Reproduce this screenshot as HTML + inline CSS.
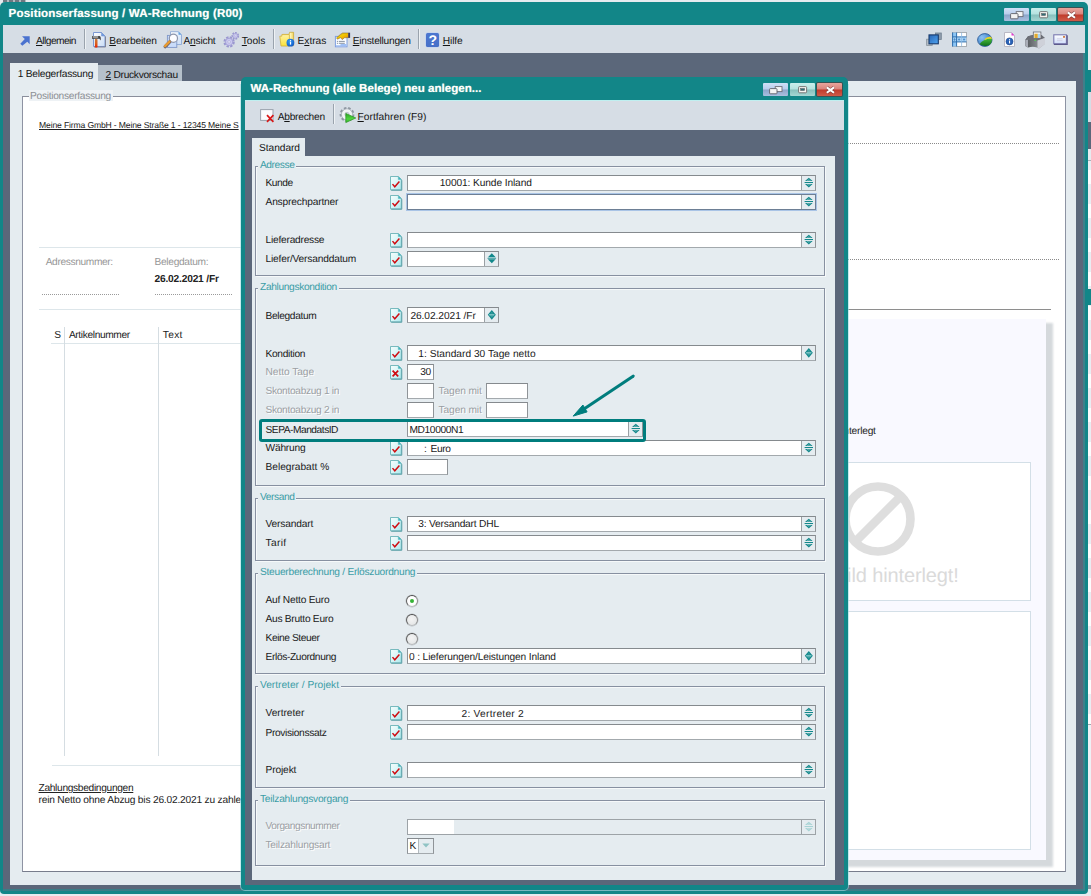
<!DOCTYPE html>
<html lang="de"><head><meta charset="utf-8"><title>Positionserfassung / WA-Rechnung (R00)</title>
<style>
html,body{margin:0;padding:0;}
body{width:1091px;height:896px;position:relative;overflow:hidden;background:#e6ebef;font-family:"Liberation Sans", sans-serif;font-size:10.2px;}
div,span,svg{position:absolute;box-sizing:content-box;}
.win{left:0;top:0;width:1091px;height:896px;}
.t{white-space:pre;line-height:14px;color:#141414;text-rendering:geometricPrecision;}
.b{font-weight:bold;-webkit-text-stroke:0;}
u{text-decoration:underline;}
.i{overflow:visible;}
.f{border:1px solid #8f9498;border-top-color:#858a8e;border-bottom-color:#a3a9ad;}
.ff{box-shadow:0 0 0 1px #a9c4e6;border-color:#6d7f95;}
.fd{border-color:#9da3a7;}
</style></head>
<body>
<svg width="0" height="0" style="left:0;top:0"><defs>
<linearGradient id="gdoc" x1="0" y1="0" x2="1" y2="1"><stop offset="0" stop-color="#f4fdfd"/><stop offset=".45" stop-color="#dcf7f8"/><stop offset="1" stop-color="#a9e8ec"/></linearGradient>
<linearGradient id="gpage" x1="0" y1="0" x2="1" y2="1"><stop offset="0" stop-color="#fff"/><stop offset="1" stop-color="#c9dcf5"/></linearGradient>
<linearGradient id="gblue" x1="0" y1="0" x2="1" y2="1"><stop offset="0" stop-color="#2a66b4"/><stop offset="1" stop-color="#4ea4f2"/></linearGradient>
<radialGradient id="gglobe" cx=".3" cy=".3" r=".8"><stop offset="0" stop-color="#8cc3f2"/><stop offset="1" stop-color="#2a6cbc"/></radialGradient>
<linearGradient id="gprn" x1="0" y1="0" x2="1" y2="0"><stop offset="0" stop-color="#4f5357"/><stop offset=".6" stop-color="#85898e"/><stop offset="1" stop-color="#c3c6ca"/></linearGradient>
<linearGradient id="gmail" x1="0" y1="0" x2="0" y2="1"><stop offset="0" stop-color="#fff"/><stop offset="1" stop-color="#cfdcfa"/></linearGradient>
<linearGradient id="ghandle" x1="0" y1="0" x2="0" y2="1"><stop offset="0" stop-color="#c8793a"/><stop offset=".6" stop-color="#dc5a18"/><stop offset="1" stop-color="#f01c00"/></linearGradient>
<linearGradient id="gfold" x1="0" y1="0" x2="1" y2="0"><stop offset="0" stop-color="#f7df63"/><stop offset=".7" stop-color="#fff6b8"/><stop offset="1" stop-color="#f0d25a"/></linearGradient>
<linearGradient id="gfold2" x1="0" y1="0" x2="0" y2="1"><stop offset="0" stop-color="#fff3a4"/><stop offset="1" stop-color="#fbe23a"/></linearGradient>
<radialGradient id="gball" cx=".4" cy=".35" r=".75"><stop offset="0" stop-color="#2f9cf6"/><stop offset="1" stop-color="#0f52c0"/></radialGradient>
<linearGradient id="ghand" x1="0" y1="0" x2="1" y2="1"><stop offset="0" stop-color="#c9b040"/><stop offset=".45" stop-color="#f2c800"/><stop offset="1" stop-color="#e27a10"/></linearGradient>
<linearGradient id="gplay" x1="0" y1="0" x2="0" y2="1"><stop offset="0" stop-color="#2ea526"/><stop offset=".6" stop-color="#4fd43f"/><stop offset="1" stop-color="#37b52c"/></linearGradient>
<linearGradient id="ggreen" x1="0" y1="0" x2="0" y2="1"><stop offset="0" stop-color="#4cc03a"/><stop offset="1" stop-color="#0f6f1e"/></linearGradient>
</defs></svg>
<div style="left:0px;top:0px;width:1091px;height:896px;background:#e6ebef;"></div>
<div style="left:1088px;top:70px;width:3px;height:21.5px;background:#128688;"></div>
<div style="left:1088px;top:91.5px;width:3px;height:30.5px;background:#d6dde5;"></div>
<div style="left:1088px;top:122px;width:3px;height:27px;background:#5b677a;"></div>
<div style="left:1088px;top:160px;width:3px;height:564px;background:repeating-linear-gradient(180deg,#e9edf2 0 10px,#fdfdfe 10px 24px,#e9edf2 24px 34px);"></div>
<div style="left:1088px;top:160px;width:3px;height:1px;background:#a9b0b8;"></div>
<div style="left:1088px;top:289.4px;width:3px;height:16px;background:#128688;"></div>
<div style="left:1088px;top:724px;width:3px;height:1px;background:#a0a6ae;"></div>
<div style="left:1088px;top:725px;width:3px;height:160px;background:#eef1f5;"></div>
<div style="left:1088px;top:885px;width:3px;height:4px;background:#8a93a0;"></div>
<div style="left:3px;top:0px;width:23px;height:2px;background:repeating-linear-gradient(90deg,#59646e 0 4px,#aab2b8 4px 6px);opacity:.85;"></div>
<div class="win" id="main">
<div style="left:0px;top:2px;width:1088px;height:892px;background:#128688;border-radius:5px 5px 4px 4px;"></div>
<span class="t b" style="top:7px;left:8.6px;font-size:11.6px;color:#fff;text-shadow:0 0 1px rgba(255,255,220,.6);letter-spacing:0.140px;">Positionserfassung / WA-Rechnung (R00)</span>
<div style="left:1004px;top:8px;width:25px;height:13px;background:linear-gradient(#cfe0f6 0,#b9cdec 48%,#8ca5cb 52%,#a9bfdf 100%);border-radius:1px;"></div>
<div style="left:1031px;top:8px;width:25px;height:13px;background:linear-gradient(#c9eeec 0,#b4e2df 48%,#86bfbc 52%,#a5d6d3 100%);border-radius:1px;"></div>
<div style="left:1058px;top:8px;width:25px;height:13px;background:linear-gradient(#e8a49c 0,#d9837a 48%,#bf3a2b 52%,#cf5a48 100%);border-radius:1px;box-shadow:0 0 0 1px rgba(90,40,40,.55);"></div>
<svg class="i" style="left:1010px;top:11px" width="14" height="9" viewBox="0 0 14 9"><rect x="6.2" y=".6" width="6.8" height="5" fill="#f6f6f6" stroke="#6d6f78" stroke-width=".9"/><rect x=".6" y="2.6" width="7.4" height="5.2" rx=".7" fill="#f3f3f3" stroke="#5d5f68" stroke-width=".9"/></svg>
<svg class="i" style="left:1039px;top:11px" width="10" height="8" viewBox="0 0 10 8"><rect x=".6" y=".6" width="8" height="6.2" rx=".9" fill="#f4f4f0" stroke="#6b6b6b" stroke-width=".9"/><rect x="2.6" y="2.5" width="4" height="2" fill="#2f6e75" stroke="#59595f" stroke-width=".5"/></svg>
<svg class="i" style="left:1065.5px;top:10.5px" width="11" height="8" viewBox="0 0 11 8"><path d="M1.8 1.4L9 6.8M9 1.4L1.8 6.8" stroke="#6a3a3a" stroke-width="3.3" opacity=".75"/><path d="M1.8 1.4L9 6.8M9 1.4L1.8 6.8" stroke="#fff" stroke-width="2"/></svg>
<div style="left:3px;top:25px;width:1081.5px;height:28px;background:#d6dde5;"></div>
<div style="left:3px;top:53px;width:1081.5px;height:836px;background:#5b677a;"></div>
<div style="left:3px;top:889px;width:1082px;height:2px;background:#3a7d87;"></div>
<div style="left:1083px;top:53px;width:1.5px;height:837px;background:#3f7f8a;"></div>
<svg class="i" style="left:19.5px;top:35.8px" width="10" height="10" viewBox="0 0 10 10"><path d="M2 .3H9.7V8.3L7.3 5.8L2.3 9.7L.3 7.7L4.8 3Z" fill="#4a72cf"/></svg>
<span class="t" style="top:35px;left:36px;letter-spacing:-0.528px;"><u>A</u>llgemein</span>
<div style="left:84px;top:29px;width:1px;height:20px;background:#9aa3ad;"></div>
<div style="left:85px;top:29px;width:1px;height:20px;background:#eef2f5;"></div>
<svg class="i" style="left:91px;top:31px" width="15" height="17" viewBox="0 0 15 17"><path d="M2.5 1.5H10.5L14 5V15.5H2.5Z" fill="url(#gpage)" stroke="#7b98d2"/><path d="M3 16H14.5V5.5" fill="none" stroke="#7d7f90" stroke-width=".9"/><path d="M10.5 1.5V5H14Z" fill="#6f9be0" stroke="#7b98d2" stroke-width=".6"/><path d="M1 5H8.2C9.6 5 10 6.4 9.7 9.4L8.4 7.7H1Z" fill="#3c3c3c"/><rect x="1.6" y="5.5" width="5.6" height="1" fill="#f2f2f2"/><rect x="3.9" y="7.7" width="2.6" height="8.9" rx="1.2" fill="url(#ghandle)"/></svg>
<span class="t" style="top:35px;left:109.3px;letter-spacing:-0.188px;"><u>B</u>earbeiten</span>
<svg class="i" style="left:163px;top:30px" width="19" height="19" viewBox="0 0 19 19"><path d="M7.5 1.7H15.5L18.5 4.7V14.5H7.5Z" fill="url(#gpage)" stroke="#8eaad6" stroke-width=".9"/><path d="M15.5 1.7V4.7H18.5Z" fill="#5f9fe0"/><rect x="4.4" y="5.4" width="9.4" height="12" fill="#c9dcfa" stroke="#7f97c8" stroke-width=".9"/><circle cx="10.4" cy="8.3" r="4.1" fill="#fdfdff" stroke="#8c95ab" stroke-width="1.2"/><path d="M6.7 11.9L2.2 16.6" stroke="#6a6270" stroke-width="3.4" stroke-linecap="round"/><path d="M6.5 11.6L2 16.2" stroke="#e89a30" stroke-width="2.4" stroke-linecap="round"/></svg>
<span class="t" style="top:35px;left:183.5px;letter-spacing:-0.203px;">A<u>n</u>sicht</span>
<svg class="i" style="left:223px;top:31px" width="17" height="17" viewBox="0 0 17 17"><g fill="#cbc9f0" stroke="#9a97d0"><circle cx="6.1" cy="10.9" r="4.5" stroke-dasharray="2.3 1.25" stroke-width="2.3" fill="none"/><circle cx="6.1" cy="10.9" r="3.6" stroke-width=".7"/><circle cx="12.3" cy="4.8" r="3" stroke-dasharray="1.7 1" stroke-width="1.7" fill="none"/><circle cx="12.3" cy="4.8" r="2.4" stroke-width=".6"/></g><circle cx="6.1" cy="10.9" r="1.4" fill="#dfe0f4" stroke="#a9a7d6" stroke-width=".6"/><circle cx="12.3" cy="4.8" r=".9" fill="#e3e4f6" stroke="#a9a7d6" stroke-width=".5"/></svg>
<span class="t" style="top:35px;left:241.8px;letter-spacing:-0.039px;"><u>T</u>ools</span>
<div style="left:273px;top:29px;width:1px;height:20px;background:#9aa3ad;"></div>
<div style="left:274px;top:29px;width:1px;height:20px;background:#eef2f5;"></div>
<svg class="i" style="left:279px;top:31px" width="16" height="17" viewBox="0 0 16 17"><path d="M3.5 3.4H10L10.6 1.3H14.6V14.6H3.5Z" fill="url(#gfold)" stroke="#c9a93a" stroke-width=".8"/><path d="M.8 5.2H2.8V3.6H10.4V15H2Z" fill="url(#gfold2)" stroke="#d0b040" stroke-width=".8"/><circle cx="11.4" cy="11.7" r="3.9" fill="url(#gball)"/><rect x="10.9" y="10.6" width="1.2" height="3" fill="#fff"/><rect x="10.9" y="9.1" width="1.2" height="1" fill="#fff"/></svg>
<span class="t" style="top:35px;left:297.5px;letter-spacing:-0.012px;">E<u>x</u>tras</span>
<svg class="i" style="left:334px;top:30px" width="17" height="18" viewBox="0 0 17 18"><rect x="1.4" y="6.4" width="11.6" height="10.4" fill="#fbfdff" stroke="#7f9fe0" stroke-width="1"/><path d="M6.5 14H12.5V16.3H2V15.2H6.5Z" fill="#9fc0f6"/><path d="M2.9 11.4H4M4.8 11.4H10.8M2.9 13.3H4M4.8 13.3H10.8" stroke="#7c8797" stroke-width=".9"/><path d="M2.6 7.8L6.4 4.4L8.6 3H14.5V7.6L10.4 7.8L8.2 9.6L6.8 7.6L3.4 9.2Z" fill="url(#ghand)" stroke="#7a5a14" stroke-width=".5"/><rect x="14.3" y="2.7" width="1.8" height="5.2" fill="#3a3a5a"/></svg>
<span class="t" style="top:35px;left:352.8px;letter-spacing:-0.259px;"><u>E</u>instellungen</span>
<div style="left:418px;top:29px;width:1px;height:20px;background:#9aa3ad;"></div>
<div style="left:419px;top:29px;width:1px;height:20px;background:#eef2f5;"></div>
<div style="left:425.8px;top:32.8px;width:13.5px;height:14px;background:linear-gradient(#4c76cf,#456fc8);border-radius:1.5px;box-shadow:0 0 0 .5px #b7cdf5;"></div>
<span class="t b" style="top:33px;left:428.6px;font-size:14px;color:#fff;">?</span>
<span class="t" style="top:35px;left:442.8px;letter-spacing:-0.118px;"><u>H</u>ilfe</span>
<svg class="i" style="left:926px;top:32px" width="16" height="14" viewBox="0 0 16 14"><rect x="9.5" y="1" width="5.8" height="6.5" fill="#8d9cab" stroke="#6f7f90" stroke-width=".8"/><rect x=".6" y="7.2" width="5.6" height="6.2" fill="#b4bcc5" stroke="#8a949e" stroke-width=".8"/><rect x="3" y="2.9" width="9.3" height="8.9" fill="url(#gblue)" stroke="#17396b" stroke-width="1.1"/></svg>
<svg class="i" style="left:951.5px;top:32px" width="15" height="15" viewBox="0 0 15 15"><rect x=".5" y=".5" width="14" height="14" fill="#fff" stroke="#a2a7ad" stroke-width=".9"/><rect x=".6" y=".6" width="4" height="13.8" fill="#8cc5f5"/><rect x=".6" y="5" width="13.8" height="4.8" fill="#a9d4f7"/><path d="M.6 .5V14.5M4.6 .5V14.5M.5 4.9H14.5M.5 9.9H14.5" stroke="#2f6fae" stroke-width="1"/><path d="M9.6 .8V14.3" stroke="#8db9e3" stroke-width=".8"/><path d="M2.6 6V9M7.1 6.2V8.8M12 6.2V8.8M6 7.5H8.2M11 7.5H13.2M1.6 7.5H3.6" stroke="#3f82c4" stroke-width=".7"/></svg>
<svg class="i" style="left:976.5px;top:32.5px" width="16" height="14" viewBox="0 0 16 14"><ellipse cx="7.8" cy="7" rx="7.2" ry="6.4" fill="url(#gglobe)" stroke="#1f4f8f" stroke-width=".8"/><path d="M2.6 11C5 7.6 9 5.6 14.8 5.2C15.3 7.4 14.6 9.9 13 11.5C10 13.5 5.5 13.6 2.6 11Z" fill="url(#ggreen)"/><path d="M8 5.8C10 3.8 13 3.3 14.3 4L14.9 6C12.5 5.6 10 5.9 7.6 7.2Z" fill="#e6d622"/></svg>
<svg class="i" style="left:1004px;top:32px" width="12" height="15" viewBox="0 0 12 15"><path d="M.5 .5H7.5L10.5 3.5V14.5H.5Z" fill="#fdfdfd" stroke="#b9b9c4"/><path d="M7.5 .5L10.5 3.5H7.5Z" fill="#e23ad0"/><circle cx="5.5" cy="9.4" r="3.5" fill="#2a63b8" stroke="#1a438a" stroke-width=".6"/><rect x="5" y="8.6" width="1.1" height="2.8" fill="#fff"/><rect x="5" y="7.2" width="1.1" height="1" fill="#fff"/></svg>
<svg class="i" style="left:1025px;top:31px" width="21" height="18" viewBox="0 0 21 18"><path d="M.3 9L3 5.2L8 4H16.5L20 7V13L14 17.6L12 16.6Q8 15 3 16.6L.3 15Z" fill="url(#gprn)"/><path d="M3 5.2L8 4H16.5L20 7L12.5 9.6L.3 9Z" fill="#6d6f76"/><path d="M12.5 9.6L20 7V13L14 17.6L12.5 16.7Z" fill="#ced1d9"/><path d="M.3 9L3 8.8V16.5L.3 15Z" fill="#a9adb7"/><rect x="8.3" y="1" width="7.6" height="6.4" fill="#fdfdfd" stroke="#666a74" stroke-width=".8"/><rect x="9.4" y="2.7" width="3.4" height="4.3" fill="#e0a92e"/><rect x="12.9" y="2.7" width="2.1" height="4.3" fill="#a9d5f3"/><rect x="9.4" y="8.6" width="1.7" height="1.3" fill="#57d052"/></svg>
<svg class="i" style="left:1053px;top:34px" width="15" height="11" viewBox="0 0 15 11"><rect x=".8" y=".8" width="12.6" height="9" fill="url(#gmail)" stroke="#7a78b0" stroke-width="1.1"/><path d="M1 10.3H14.2V1.2" fill="none" stroke="#5d5a8c" stroke-width="1.2"/><rect x="10.2" y="2" width="1.6" height="1.8" fill="#c8641e"/><path d="M4 4.8H9.5M4 6.6H9.5" stroke="#c9c6dc" stroke-width=".7"/></svg>
<div style="left:10px;top:63px;width:88px;height:20px;background:#e5ecf0;"></div>
<div style="left:98px;top:65px;width:84px;height:17px;background:#b5c0ca;"></div>
<span class="t" style="top:68px;left:17.8px;letter-spacing:-0.250px;">1 Belegerfassung</span>
<span class="t" style="top:69px;left:105.5px;letter-spacing:-0.277px;"><u>2</u> Druckvorschau</span>
<div style="left:10px;top:81.4px;width:1066px;height:803.6px;background:#e5ecf0;"></div>
<div style="left:22px;top:95.6px;width:1042px;height:774.4px;background:#fff;border:1px solid #787d8c;border-top-color:#8a8e9b;border-right-color:#8d93a3;border-left-color:#8e93a3;"></div>
<div style="left:29px;top:90px;width:84px;height:11px;background:#eef2f5;"></div>
<span class="t" style="top:90px;left:30px;color:#8c8f94;letter-spacing:-0.282px;">Positionserfassung</span>
<span class="t" style="top:118px;left:39px;font-size:8.6px;color:#222;text-decoration:underline;letter-spacing:-0.147px;">Meine Firma GmbH - Meine Straße 1 - 12345 Meine S</span>
<div style="left:39px;top:247px;width:700px;height:1px;background:#dde6ea;"></div>
<span class="t" style="top:256px;left:45.7px;color:#979797;letter-spacing:-0.370px;">Adressnummer:</span>
<span class="t" style="top:256px;left:154.5px;color:#979797;letter-spacing:-0.309px;">Belegdatum:</span>
<span class="t b" style="top:273px;left:154.5px;color:#222;letter-spacing:-0.189px;">26.02.2021 /Fr</span>
<div style="left:42px;top:294px;width:78px;height:1px;background:repeating-linear-gradient(90deg,#9a9a9a 0 1px,transparent 1px 2px);"></div>
<div style="left:155px;top:294px;width:77px;height:1px;background:repeating-linear-gradient(90deg,#9a9a9a 0 1px,transparent 1px 2px);"></div>
<div style="left:39px;top:309px;width:820px;height:1px;background:#dde6ea;"></div>
<span class="t" style="top:329px;left:54.3px;color:#222;letter-spacing:-1.097px;">S</span>
<span class="t" style="top:329px;left:68.9px;color:#222;letter-spacing:-0.367px;">Artikelnummer</span>
<span class="t" style="top:329px;left:162.7px;color:#222;letter-spacing:0.353px;">Text</span>
<div style="left:51px;top:343px;width:800px;height:1px;background:#dde6ea;"></div>
<div style="left:64px;top:327px;width:1px;height:429px;background:#d5dde2;"></div>
<div style="left:158px;top:327px;width:1px;height:429px;background:#d5dde2;"></div>
<div style="left:52px;top:765px;width:800px;height:1px;background:#dde6ea;"></div>
<span class="t" style="top:782px;left:38.5px;color:#222;text-decoration:underline;letter-spacing:-0.318px;">Zahlungsbedingungen</span>
<span class="t" style="top:794px;left:38.5px;color:#222;letter-spacing:-0.195px;">rein Netto ohne Abzug bis 26.02.2021 zu zahlen</span>
<div style="left:700px;top:143px;width:359px;height:1px;background:repeating-linear-gradient(90deg,#8a8a8a 0 1px,transparent 1px 2px);"></div>
<div style="left:700px;top:259px;width:359px;height:1px;background:repeating-linear-gradient(90deg,#8a8a8a 0 1px,transparent 1px 2px);"></div>
<div style="left:700px;top:309px;width:351px;height:1px;background:#8e8e8e;"></div>
<div style="left:702px;top:323px;width:351px;height:543.5px;background:#d5d9dc;filter:blur(1.1px);"></div>
<div style="left:700px;top:319px;width:346px;height:541px;background:#f9f9ff;"></div>
<span class="t" style="top:425px;right:215.29999999999995px;color:#222;letter-spacing:-0.216px;">Kein Bild hinterlegt</span>
<div style="left:725px;top:462px;width:304px;height:136.5px;background:#fff;border:1px solid #d3dfe7;"></div>
<svg class="i" style="left:841px;top:482px" width="74" height="74" viewBox="0 0 74 74"><circle cx="37" cy="37" r="32.5" fill="none" stroke="#dedede" stroke-width="8.6"/><path d="M14 60L60 14" stroke="#dedede" stroke-width="8.6"/></svg>
<span class="t" style="top:569px;right:132.39999999999998px;font-size:20px;color:#dadada;letter-spacing:-0.127px;">Kein Bild hinterlegt!</span>
<div style="left:725px;top:610.5px;width:304px;height:237px;background:#fff;border:1px solid #d3dfe7;"></div>
</div>
<div class="win" id="dlg">
<div style="left:240px;top:84px;width:609px;height:806.6px;background:rgba(160,222,228,.6);border-radius:0 0 5px 5px;"></div>
<div style="left:241px;top:77px;width:607px;height:812.6px;background:#128688;border-radius:5px 5px 4px 4px;"></div>
<span class="t b" style="top:82px;left:250.4px;font-size:11.6px;color:#fff;text-shadow:0 0 1px rgba(255,255,220,.6);letter-spacing:-0.007px;">WA-Rechnung (alle Belege) neu anlegen...</span>
<div style="left:763px;top:83px;width:25px;height:13px;background:linear-gradient(#cfe0f6 0,#b9cdec 48%,#8ca5cb 52%,#a9bfdf 100%);border-radius:1px;"></div>
<div style="left:790px;top:83px;width:25px;height:13px;background:linear-gradient(#c9eeec 0,#b4e2df 48%,#86bfbc 52%,#a5d6d3 100%);border-radius:1px;"></div>
<div style="left:817px;top:83px;width:25px;height:13px;background:linear-gradient(#e8a49c 0,#d9837a 48%,#bf3a2b 52%,#cf5a48 100%);border-radius:1px;box-shadow:0 0 0 1px rgba(90,40,40,.55);"></div>
<svg class="i" style="left:769px;top:86px" width="14" height="9" viewBox="0 0 14 9"><rect x="6.2" y=".6" width="6.8" height="5" fill="#f6f6f6" stroke="#6d6f78" stroke-width=".9"/><rect x=".6" y="2.6" width="7.4" height="5.2" rx=".7" fill="#f3f3f3" stroke="#5d5f68" stroke-width=".9"/></svg>
<svg class="i" style="left:798px;top:86px" width="10" height="8" viewBox="0 0 10 8"><rect x=".6" y=".6" width="8" height="6.2" rx=".9" fill="#f4f4f0" stroke="#6b6b6b" stroke-width=".9"/><rect x="2.6" y="2.5" width="4" height="2" fill="#2f6e75" stroke="#59595f" stroke-width=".5"/></svg>
<svg class="i" style="left:824.5px;top:85.5px" width="11" height="8" viewBox="0 0 11 8"><path d="M1.8 1.4L9 6.8M9 1.4L1.8 6.8" stroke="#6a3a3a" stroke-width="3.3" opacity=".75"/><path d="M1.8 1.4L9 6.8M9 1.4L1.8 6.8" stroke="#fff" stroke-width="2"/></svg>
<div style="left:245px;top:100px;width:599px;height:30px;background:#d6dde5;border-top:1px solid #bfeff0;box-sizing:border-box;"></div>
<div style="left:245px;top:130px;width:599px;height:755px;background:#5b677a;"></div>
<svg class="i" style="left:260px;top:109px" width="15" height="14" viewBox="0 0 15 14"><rect x=".6" y=".6" width="12.4" height="10.8" fill="#fbfcfd" stroke="#9aa3ad" stroke-width="1"/><path d="M7 6.2L13.4 12.8M13.4 6.2L7 12.8" stroke="#d81818" stroke-width="1.7"/></svg>
<span class="t" style="top:111px;left:277.7px;letter-spacing:-0.233px;">A<u>b</u>brechen</span>
<div style="left:332.5px;top:104px;width:1px;height:20px;background:#9aa3ad;"></div>
<div style="left:333.5px;top:104px;width:1px;height:20px;background:#eef2f5;"></div>
<svg class="i" style="left:339px;top:106px" width="19" height="19" viewBox="0 0 19 19"><g><circle cx="8" cy="8.4" r="6.3" fill="none" stroke="#8f98a2" stroke-width="2.2" stroke-dasharray="2.5 1.8"/><circle cx="8" cy="8.4" r="5.6" fill="#f1f3f6" stroke="#9aa2ac" stroke-width=".7"/><circle cx="8" cy="8.4" r="2.1" fill="#dfe4ea" stroke="#a3abb5" stroke-width=".6"/></g><path d="M6.8 7.4L16.8 12L6.8 16.6Z" fill="url(#gplay)" stroke="#2a9422" stroke-width=".7" stroke-linejoin="round"/></svg>
<span class="t" style="top:111px;left:357.5px;letter-spacing:0.032px;"><u>F</u>ortfahren (F9)</span>
<div style="left:252px;top:138px;width:53px;height:19px;background:#e5ecf0;"></div>
<span class="t" style="top:142px;left:259px;letter-spacing:-0.045px;">Standard</span>
<div style="left:252px;top:156px;width:583px;height:724px;background:#e5ecf0;"></div>
<div class="g" style="left:255px;top:166px;width:568px;height:108px;border:1px solid #8790a1;box-shadow:inset 1px 1px 0 #f6f9fa, 1px 1px 0 #f6f9fa;"></div>
<div style="left:258px;top:164px;width:38.4px;height:5px;background:#e5ecf0;"></div>
<span class="t" style="top:159px;left:260px;color:#3a9da6;letter-spacing:-0.425px;">Adresse</span>
<span class="t" style="top:177px;left:265.5px;color:#1a1a1a;letter-spacing:-0.434px;">Kunde</span>
<svg class="i" style="left:390.2px;top:175.5px" width="12" height="15" viewBox="0 0 12 15"><path d="M.5 .5H8.3L11.3 3.5V13.8H.5Z" fill="url(#gdoc)" stroke="#6bb3b8" stroke-width=".9"/><path d="M1.2 14.3H11.8V4.2" fill="none" stroke="#5a9ea5" stroke-width=".9"/><path d="M8.3 .5V3.5H11.3Z" fill="#35b7c1" stroke="#6bb3b8" stroke-width=".5"/><path d="M2.5 8.1L4.8 10.8L9.4 5.5" fill="none" stroke="#cf0d12" stroke-width="1.45"/></svg>
<div class="f" style="left:407px;top:175px;width:407px;height:14px;background:#fff;"></div>
<div style="left:801px;top:176px;width:1px;height:14px;background:#9aa0a4;"></div>
<div style="left:802px;top:176px;width:13px;height:14px;background:#e5ecf0;"></div>
<svg class="i" style="left:801px;top:175px" width="15" height="16" viewBox="0 0 15 16"><path d="M4.0 6.1L7.8 2.7L11.6 6.1L10.0 6.1L7.8 4.6L5.6 6.1Z M4.0 9L7.8 12.4L11.6 9L10.0 9L7.8 10.5L5.6 9Z" fill="#12888b"/><path d="M5.6 6.1L7.8 4.6L10.0 6.1Z M5.6 9L7.8 10.5L10.0 9Z" fill="#12888b" opacity=".72"/><rect x="3.5999999999999996" y="7" width="8.4" height="1.05" fill="#12888b"/></svg>
<span class="t" style="top:177px;left:439.8px;color:#1a1a1a;letter-spacing:-0.108px;">10001: Kunde Inland</span>
<span class="t" style="top:196px;left:265.5px;color:#1a1a1a;letter-spacing:-0.169px;">Ansprechpartner</span>
<svg class="i" style="left:390.2px;top:194.5px" width="12" height="15" viewBox="0 0 12 15"><path d="M.5 .5H8.3L11.3 3.5V13.8H.5Z" fill="url(#gdoc)" stroke="#6bb3b8" stroke-width=".9"/><path d="M1.2 14.3H11.8V4.2" fill="none" stroke="#5a9ea5" stroke-width=".9"/><path d="M8.3 .5V3.5H11.3Z" fill="#35b7c1" stroke="#6bb3b8" stroke-width=".5"/><path d="M2.5 8.1L4.8 10.8L9.4 5.5" fill="none" stroke="#cf0d12" stroke-width="1.45"/></svg>
<div class="f ff" style="left:407px;top:194px;width:407px;height:14px;background:#fff;"></div>
<div style="left:801px;top:195px;width:1px;height:14px;background:#9aa0a4;"></div>
<div style="left:802px;top:195px;width:13px;height:14px;background:#e5ecf0;"></div>
<svg class="i" style="left:801px;top:194px" width="15" height="16" viewBox="0 0 15 16"><path d="M4.0 6.1L7.8 2.7L11.6 6.1L10.0 6.1L7.8 4.6L5.6 6.1Z M4.0 9L7.8 12.4L11.6 9L10.0 9L7.8 10.5L5.6 9Z" fill="#12888b"/><path d="M5.6 6.1L7.8 4.6L10.0 6.1Z M5.6 9L7.8 10.5L10.0 9Z" fill="#12888b" opacity=".72"/><rect x="3.5999999999999996" y="7" width="8.4" height="1.05" fill="#12888b"/></svg>
<span class="t" style="top:234px;left:265.5px;color:#1a1a1a;letter-spacing:-0.226px;">Lieferadresse</span>
<svg class="i" style="left:390.2px;top:232.5px" width="12" height="15" viewBox="0 0 12 15"><path d="M.5 .5H8.3L11.3 3.5V13.8H.5Z" fill="url(#gdoc)" stroke="#6bb3b8" stroke-width=".9"/><path d="M1.2 14.3H11.8V4.2" fill="none" stroke="#5a9ea5" stroke-width=".9"/><path d="M8.3 .5V3.5H11.3Z" fill="#35b7c1" stroke="#6bb3b8" stroke-width=".5"/><path d="M2.5 8.1L4.8 10.8L9.4 5.5" fill="none" stroke="#cf0d12" stroke-width="1.45"/></svg>
<div class="f" style="left:407px;top:232px;width:407px;height:14px;background:#fff;"></div>
<div style="left:801px;top:233px;width:1px;height:14px;background:#9aa0a4;"></div>
<div style="left:802px;top:233px;width:13px;height:14px;background:#e5ecf0;"></div>
<svg class="i" style="left:801px;top:232px" width="15" height="16" viewBox="0 0 15 16"><path d="M4.0 6.1L7.8 2.7L11.6 6.1L10.0 6.1L7.8 4.6L5.6 6.1Z M4.0 9L7.8 12.4L11.6 9L10.0 9L7.8 10.5L5.6 9Z" fill="#12888b"/><path d="M5.6 6.1L7.8 4.6L10.0 6.1Z M5.6 9L7.8 10.5L10.0 9Z" fill="#12888b" opacity=".72"/><rect x="3.5999999999999996" y="7" width="8.4" height="1.05" fill="#12888b"/></svg>
<span class="t" style="top:253px;left:265.5px;color:#1a1a1a;letter-spacing:-0.180px;">Liefer/Versanddatum</span>
<svg class="i" style="left:390.2px;top:251.5px" width="12" height="15" viewBox="0 0 12 15"><path d="M.5 .5H8.3L11.3 3.5V13.8H.5Z" fill="url(#gdoc)" stroke="#6bb3b8" stroke-width=".9"/><path d="M1.2 14.3H11.8V4.2" fill="none" stroke="#5a9ea5" stroke-width=".9"/><path d="M8.3 .5V3.5H11.3Z" fill="#35b7c1" stroke="#6bb3b8" stroke-width=".5"/><path d="M2.5 8.1L4.8 10.8L9.4 5.5" fill="none" stroke="#cf0d12" stroke-width="1.45"/></svg>
<div class="f" style="left:407px;top:251px;width:90px;height:14px;background:#fff;"></div>
<div style="left:484px;top:252px;width:1px;height:14px;background:#9aa0a4;"></div>
<div style="left:485px;top:252px;width:13px;height:14px;background:#e5ecf0;"></div>
<svg class="i" style="left:484px;top:251px" width="15" height="16" viewBox="0 0 15 16"><path d="M3.9 6.3L7.8 2.2L11.7 6.3Z M3.9 8.3L7.8 12.2L11.7 8.3Z" fill="#12888b"/><rect x="3.5" y="6.8" width="8.6" height="1" fill="#12888b" opacity=".8"/></svg>
<div class="g" style="left:255px;top:288px;width:568px;height:196px;border:1px solid #8790a1;box-shadow:inset 1px 1px 0 #f6f9fa, 1px 1px 0 #f6f9fa;"></div>
<div style="left:258px;top:286px;width:80.9px;height:5px;background:#e5ecf0;"></div>
<span class="t" style="top:281px;left:260px;color:#3a9da6;letter-spacing:-0.341px;">Zahlungskondition</span>
<span class="t" style="top:310px;left:265.5px;color:#1a1a1a;letter-spacing:-0.338px;">Belegdatum</span>
<svg class="i" style="left:390.2px;top:307.5px" width="12" height="15" viewBox="0 0 12 15"><path d="M.5 .5H8.3L11.3 3.5V13.8H.5Z" fill="url(#gdoc)" stroke="#6bb3b8" stroke-width=".9"/><path d="M1.2 14.3H11.8V4.2" fill="none" stroke="#5a9ea5" stroke-width=".9"/><path d="M8.3 .5V3.5H11.3Z" fill="#35b7c1" stroke="#6bb3b8" stroke-width=".5"/><path d="M2.5 8.1L4.8 10.8L9.4 5.5" fill="none" stroke="#cf0d12" stroke-width="1.45"/></svg>
<div class="f" style="left:407px;top:307px;width:90px;height:14px;background:#fff;"></div>
<div style="left:484px;top:308px;width:1px;height:14px;background:#9aa0a4;"></div>
<div style="left:485px;top:308px;width:13px;height:14px;background:#e5ecf0;"></div>
<svg class="i" style="left:484px;top:307px" width="15" height="16" viewBox="0 0 15 16"><path d="M7.8 2.9L11.8 7.8L7.8 12.7L3.8 7.8Z" fill="#12888b"/><path d="M4.9 7.2H10.7L10.1 8.4H5.5Z" fill="#9bd3d4"/><path d="M6.199999999999999 6.6L7.8 4.9L9.4 6.6Z M6.199999999999999 9L7.8 10.7L9.4 9Z" fill="#5fb3b5" opacity=".55"/></svg>
<span class="t" style="top:310px;left:410.4px;color:#1a1a1a;letter-spacing:-0.062px;">26.02.2021 /Fr</span>
<span class="t" style="top:348px;left:265.5px;color:#1a1a1a;letter-spacing:-0.309px;">Kondition</span>
<svg class="i" style="left:390.2px;top:345.5px" width="12" height="15" viewBox="0 0 12 15"><path d="M.5 .5H8.3L11.3 3.5V13.8H.5Z" fill="url(#gdoc)" stroke="#6bb3b8" stroke-width=".9"/><path d="M1.2 14.3H11.8V4.2" fill="none" stroke="#5a9ea5" stroke-width=".9"/><path d="M8.3 .5V3.5H11.3Z" fill="#35b7c1" stroke="#6bb3b8" stroke-width=".5"/><path d="M2.5 8.1L4.8 10.8L9.4 5.5" fill="none" stroke="#cf0d12" stroke-width="1.45"/></svg>
<div class="f" style="left:407px;top:345px;width:407px;height:14px;background:#fff;"></div>
<div style="left:801px;top:346px;width:1px;height:14px;background:#9aa0a4;"></div>
<div style="left:802px;top:346px;width:13px;height:14px;background:#e5ecf0;"></div>
<svg class="i" style="left:801px;top:345px" width="15" height="16" viewBox="0 0 15 16"><path d="M7.8 2.9L11.8 7.8L7.8 12.7L3.8 7.8Z" fill="#12888b"/><path d="M4.9 7.2H10.7L10.1 8.4H5.5Z" fill="#9bd3d4"/><path d="M6.199999999999999 6.6L7.8 4.9L9.4 6.6Z M6.199999999999999 9L7.8 10.7L9.4 9Z" fill="#5fb3b5" opacity=".55"/></svg>
<span class="t" style="top:348px;left:418.3px;color:#1a1a1a;letter-spacing:0.009px;">1: Standard 30 Tage netto</span>
<span class="t" style="top:366px;left:265.5px;color:#9b9fa4;text-shadow:1px 1px 0 #fff;letter-spacing:-0.059px;">Netto Tage</span>
<svg class="i" style="left:390.2px;top:364.5px" width="12" height="15" viewBox="0 0 12 15"><path d="M.5 .5H8.3L11.3 3.5V13.8H.5Z" fill="url(#gdoc)" stroke="#6bb3b8" stroke-width=".9"/><path d="M1.2 14.3H11.8V4.2" fill="none" stroke="#5a9ea5" stroke-width=".9"/><path d="M8.3 .5V3.5H11.3Z" fill="#35b7c1" stroke="#6bb3b8" stroke-width=".5"/><path d="M2.6 5.7L8.2 11.3M8.2 5.7L2.6 11.3" fill="none" stroke="#cf0d12" stroke-width="1.7"/></svg>
<div class="f" style="left:407px;top:364px;width:25px;height:14px;background:#fff;"></div>
<span class="t" style="top:366px;right:660px;color:#1a1a1a;letter-spacing:-0.272px;">30</span>
<span class="t" style="top:385px;left:265.5px;color:#9b9fa4;text-shadow:1px 1px 0 #fff;letter-spacing:-0.321px;">Skontoabzug 1 in</span>
<div class="f" style="left:407px;top:383px;width:25px;height:14px;background:#fff;"></div>
<div class="f" style="left:486px;top:383px;width:40px;height:14px;background:#fff;"></div>
<span class="t" style="top:385px;left:438.6px;color:#9b9fa4;text-shadow:1px 1px 0 #fff;letter-spacing:-0.130px;">Tagen mit</span>
<span class="t" style="top:404px;left:265.5px;color:#9b9fa4;text-shadow:1px 1px 0 #fff;letter-spacing:-0.321px;">Skontoabzug 2 in</span>
<div class="f" style="left:407px;top:402px;width:25px;height:14px;background:#fff;"></div>
<div class="f" style="left:486px;top:402px;width:40px;height:14px;background:#fff;"></div>
<span class="t" style="top:404px;left:438.6px;color:#9b9fa4;text-shadow:1px 1px 0 #fff;letter-spacing:-0.130px;">Tagen mit</span>
<span class="t" style="top:424px;left:265.5px;color:#1a1a1a;letter-spacing:-0.470px;">SEPA-MandatsID</span>
<div class="f" style="left:407px;top:421px;width:234px;height:14px;background:#fff;"></div>
<div style="left:628px;top:422px;width:1px;height:14px;background:#9aa0a4;"></div>
<div style="left:629px;top:422px;width:13px;height:14px;background:#e5ecf0;"></div>
<svg class="i" style="left:628px;top:421px" width="15" height="16" viewBox="0 0 15 16"><path d="M4.0 6.1L7.8 2.7L11.6 6.1L10.0 6.1L7.8 4.6L5.6 6.1Z M4.0 9L7.8 12.4L11.6 9L10.0 9L7.8 10.5L5.6 9Z" fill="#12888b"/><path d="M5.6 6.1L7.8 4.6L10.0 6.1Z M5.6 9L7.8 10.5L10.0 9Z" fill="#12888b" opacity=".72"/><rect x="3.5999999999999996" y="7" width="8.4" height="1.05" fill="#12888b"/></svg>
<span class="t" style="top:424px;left:409.4px;color:#1a1a1a;letter-spacing:-0.356px;">MD10000N1</span>
<span class="t" style="top:442px;left:265.5px;color:#1a1a1a;letter-spacing:-0.192px;">Währung</span>
<svg class="i" style="left:390.2px;top:440.5px" width="12" height="15" viewBox="0 0 12 15"><path d="M.5 .5H8.3L11.3 3.5V13.8H.5Z" fill="url(#gdoc)" stroke="#6bb3b8" stroke-width=".9"/><path d="M1.2 14.3H11.8V4.2" fill="none" stroke="#5a9ea5" stroke-width=".9"/><path d="M8.3 .5V3.5H11.3Z" fill="#35b7c1" stroke="#6bb3b8" stroke-width=".5"/><path d="M2.5 8.1L4.8 10.8L9.4 5.5" fill="none" stroke="#cf0d12" stroke-width="1.45"/></svg>
<div class="f" style="left:407px;top:440px;width:407px;height:14px;background:#fff;"></div>
<div style="left:801px;top:441px;width:1px;height:14px;background:#9aa0a4;"></div>
<div style="left:802px;top:441px;width:13px;height:14px;background:#e5ecf0;"></div>
<svg class="i" style="left:801px;top:440px" width="15" height="16" viewBox="0 0 15 16"><path d="M4.0 6.1L7.8 2.7L11.6 6.1L10.0 6.1L7.8 4.6L5.6 6.1Z M4.0 9L7.8 12.4L11.6 9L10.0 9L7.8 10.5L5.6 9Z" fill="#12888b"/><path d="M5.6 6.1L7.8 4.6L10.0 6.1Z M5.6 9L7.8 10.5L10.0 9Z" fill="#12888b" opacity=".72"/><rect x="3.5999999999999996" y="7" width="8.4" height="1.05" fill="#12888b"/></svg>
<span class="t" style="top:443px;left:424px;color:#1a1a1a;letter-spacing:-0.216px;">:</span>
<span class="t" style="top:443px;left:430.6px;color:#1a1a1a;letter-spacing:-0.383px;">Euro</span>
<span class="t" style="top:461px;left:265.5px;color:#1a1a1a;letter-spacing:-0.023px;">Belegrabatt %</span>
<svg class="i" style="left:390.2px;top:459.5px" width="12" height="15" viewBox="0 0 12 15"><path d="M.5 .5H8.3L11.3 3.5V13.8H.5Z" fill="url(#gdoc)" stroke="#6bb3b8" stroke-width=".9"/><path d="M1.2 14.3H11.8V4.2" fill="none" stroke="#5a9ea5" stroke-width=".9"/><path d="M8.3 .5V3.5H11.3Z" fill="#35b7c1" stroke="#6bb3b8" stroke-width=".5"/><path d="M2.5 8.1L4.8 10.8L9.4 5.5" fill="none" stroke="#cf0d12" stroke-width="1.45"/></svg>
<div class="f" style="left:407px;top:459px;width:39px;height:14px;background:#fff;"></div>
<div class="hl" style="left:259px;top:419px;width:381px;height:17px;border:3px solid #007d7d;border-radius:3px;"></div>
<svg class="i" style="left:568px;top:370px" width="72" height="52" viewBox="0 0 72 52"><path d="M65.1 6.2L13 41" stroke="#007d7d" stroke-width="3" stroke-linecap="round"/><path d="M5.2 46.1L14.9 35L19.1 41.9Z" fill="#007d7d" stroke="#007d7d" stroke-width="1" stroke-linejoin="round"/></svg>
<div class="g" style="left:255px;top:498px;width:568px;height:61px;border:1px solid #8790a1;box-shadow:inset 1px 1px 0 #f6f9fa, 1px 1px 0 #f6f9fa;"></div>
<div style="left:258px;top:496px;width:38.4px;height:5px;background:#e5ecf0;"></div>
<span class="t" style="top:491px;left:260px;color:#3a9da6;letter-spacing:-0.427px;">Versand</span>
<span class="t" style="top:518px;left:265.5px;color:#1a1a1a;letter-spacing:-0.148px;">Versandart</span>
<svg class="i" style="left:390.2px;top:516.5px" width="12" height="15" viewBox="0 0 12 15"><path d="M.5 .5H8.3L11.3 3.5V13.8H.5Z" fill="url(#gdoc)" stroke="#6bb3b8" stroke-width=".9"/><path d="M1.2 14.3H11.8V4.2" fill="none" stroke="#5a9ea5" stroke-width=".9"/><path d="M8.3 .5V3.5H11.3Z" fill="#35b7c1" stroke="#6bb3b8" stroke-width=".5"/><path d="M2.5 8.1L4.8 10.8L9.4 5.5" fill="none" stroke="#cf0d12" stroke-width="1.45"/></svg>
<div class="f" style="left:407px;top:516px;width:407px;height:14px;background:#fff;"></div>
<div style="left:801px;top:517px;width:1px;height:14px;background:#9aa0a4;"></div>
<div style="left:802px;top:517px;width:13px;height:14px;background:#e5ecf0;"></div>
<svg class="i" style="left:801px;top:516px" width="15" height="16" viewBox="0 0 15 16"><path d="M4.0 6.1L7.8 2.7L11.6 6.1L10.0 6.1L7.8 4.6L5.6 6.1Z M4.0 9L7.8 12.4L11.6 9L10.0 9L7.8 10.5L5.6 9Z" fill="#12888b"/><path d="M5.6 6.1L7.8 4.6L10.0 6.1Z M5.6 9L7.8 10.5L10.0 9Z" fill="#12888b" opacity=".72"/><rect x="3.5999999999999996" y="7" width="8.4" height="1.05" fill="#12888b"/></svg>
<span class="t" style="top:518px;left:418.3px;color:#1a1a1a;letter-spacing:-0.189px;">3: Versandart DHL</span>
<span class="t" style="top:537px;left:265.5px;color:#1a1a1a;letter-spacing:0.350px;">Tarif</span>
<svg class="i" style="left:390.2px;top:535.5px" width="12" height="15" viewBox="0 0 12 15"><path d="M.5 .5H8.3L11.3 3.5V13.8H.5Z" fill="url(#gdoc)" stroke="#6bb3b8" stroke-width=".9"/><path d="M1.2 14.3H11.8V4.2" fill="none" stroke="#5a9ea5" stroke-width=".9"/><path d="M8.3 .5V3.5H11.3Z" fill="#35b7c1" stroke="#6bb3b8" stroke-width=".5"/><path d="M2.5 8.1L4.8 10.8L9.4 5.5" fill="none" stroke="#cf0d12" stroke-width="1.45"/></svg>
<div class="f" style="left:407px;top:535px;width:407px;height:14px;background:#fff;"></div>
<div style="left:801px;top:536px;width:1px;height:14px;background:#9aa0a4;"></div>
<div style="left:802px;top:536px;width:13px;height:14px;background:#e5ecf0;"></div>
<svg class="i" style="left:801px;top:535px" width="15" height="16" viewBox="0 0 15 16"><path d="M4.0 6.1L7.8 2.7L11.6 6.1L10.0 6.1L7.8 4.6L5.6 6.1Z M4.0 9L7.8 12.4L11.6 9L10.0 9L7.8 10.5L5.6 9Z" fill="#12888b"/><path d="M5.6 6.1L7.8 4.6L10.0 6.1Z M5.6 9L7.8 10.5L10.0 9Z" fill="#12888b" opacity=".72"/><rect x="3.5999999999999996" y="7" width="8.4" height="1.05" fill="#12888b"/></svg>
<div class="g" style="left:255px;top:573px;width:568px;height:99px;border:1px solid #8790a1;box-shadow:inset 1px 1px 0 #f6f9fa, 1px 1px 0 #f6f9fa;"></div>
<div style="left:258px;top:571px;width:159.2px;height:5px;background:#e5ecf0;"></div>
<span class="t" style="top:566px;left:260px;color:#3a9da6;letter-spacing:-0.257px;">Steuerberechnung / Erlöszuordnung</span>
<span class="t" style="top:594px;left:265.5px;color:#1a1a1a;letter-spacing:-0.202px;">Auf Netto Euro</span>
<span class="t" style="top:613px;left:265.5px;color:#1a1a1a;letter-spacing:-0.275px;">Aus Brutto Euro</span>
<span class="t" style="top:632px;left:265.5px;color:#1a1a1a;letter-spacing:-0.409px;">Keine Steuer</span>
<div style="left:406px;top:595px;width:10px;height:10px;border-radius:50%;background:radial-gradient(circle at 40% 35%,#fff 0,#fff 55%,#f2f4f4 100%);border:1px solid #555;border-color:#4d4d4d #8d8d8d #b9bcbe #5f5f5f;box-shadow:0 0 0 .5px rgba(120,120,120,.35);"></div>
<div style="left:409.7px;top:598.8px;width:4.6px;height:4.6px;border-radius:50%;background:#36b336;"></div>
<div style="left:406px;top:614px;width:10px;height:10px;border-radius:50%;background:radial-gradient(circle at 45% 40%,#f4f4f4 0,#e6e8e8 70%,#dcdfe0 100%);border:1px solid #555;border-color:#4d4d4d #8d8d8d #b9bcbe #5f5f5f;box-shadow:0 0 0 .5px rgba(120,120,120,.35);"></div>
<div style="left:406px;top:633px;width:10px;height:10px;border-radius:50%;background:radial-gradient(circle at 45% 40%,#f4f4f4 0,#e6e8e8 70%,#dcdfe0 100%);border:1px solid #555;border-color:#4d4d4d #8d8d8d #b9bcbe #5f5f5f;box-shadow:0 0 0 .5px rgba(120,120,120,.35);"></div>
<span class="t" style="top:651px;left:265.5px;color:#1a1a1a;letter-spacing:-0.353px;">Erlös-Zuordnung</span>
<svg class="i" style="left:390.2px;top:648.5px" width="12" height="15" viewBox="0 0 12 15"><path d="M.5 .5H8.3L11.3 3.5V13.8H.5Z" fill="url(#gdoc)" stroke="#6bb3b8" stroke-width=".9"/><path d="M1.2 14.3H11.8V4.2" fill="none" stroke="#5a9ea5" stroke-width=".9"/><path d="M8.3 .5V3.5H11.3Z" fill="#35b7c1" stroke="#6bb3b8" stroke-width=".5"/><path d="M2.5 8.1L4.8 10.8L9.4 5.5" fill="none" stroke="#cf0d12" stroke-width="1.45"/></svg>
<div class="f" style="left:407px;top:648px;width:407px;height:14px;background:#fff;"></div>
<div style="left:801px;top:649px;width:1px;height:14px;background:#9aa0a4;"></div>
<div style="left:802px;top:649px;width:13px;height:14px;background:#e5ecf0;"></div>
<svg class="i" style="left:801px;top:648px" width="15" height="16" viewBox="0 0 15 16"><path d="M7.8 2.9L11.8 7.8L7.8 12.7L3.8 7.8Z" fill="#12888b"/><path d="M4.9 7.2H10.7L10.1 8.4H5.5Z" fill="#9bd3d4"/><path d="M6.199999999999999 6.6L7.8 4.9L9.4 6.6Z M6.199999999999999 9L7.8 10.7L9.4 9Z" fill="#5fb3b5" opacity=".55"/></svg>
<span class="t" style="top:651px;left:409px;color:#1a1a1a;letter-spacing:-0.135px;">0 : Lieferungen/Leistungen Inland</span>
<div class="g" style="left:255px;top:686px;width:568px;height:100px;border:1px solid #8790a1;box-shadow:inset 1px 1px 0 #f6f9fa, 1px 1px 0 #f6f9fa;"></div>
<div style="left:258px;top:684px;width:83px;height:5px;background:#e5ecf0;"></div>
<span class="t" style="top:679px;left:260px;color:#3a9da6;letter-spacing:-0.015px;">Vertreter / Projekt</span>
<span class="t" style="top:707px;left:265.5px;color:#1a1a1a;letter-spacing:-0.031px;">Vertreter</span>
<svg class="i" style="left:390.2px;top:705.5px" width="12" height="15" viewBox="0 0 12 15"><path d="M.5 .5H8.3L11.3 3.5V13.8H.5Z" fill="url(#gdoc)" stroke="#6bb3b8" stroke-width=".9"/><path d="M1.2 14.3H11.8V4.2" fill="none" stroke="#5a9ea5" stroke-width=".9"/><path d="M8.3 .5V3.5H11.3Z" fill="#35b7c1" stroke="#6bb3b8" stroke-width=".5"/><path d="M2.5 8.1L4.8 10.8L9.4 5.5" fill="none" stroke="#cf0d12" stroke-width="1.45"/></svg>
<div class="f" style="left:407px;top:705px;width:407px;height:14px;background:#fff;"></div>
<div style="left:801px;top:706px;width:1px;height:14px;background:#9aa0a4;"></div>
<div style="left:802px;top:706px;width:13px;height:14px;background:#e5ecf0;"></div>
<svg class="i" style="left:801px;top:705px" width="15" height="16" viewBox="0 0 15 16"><path d="M4.0 6.1L7.8 2.7L11.6 6.1L10.0 6.1L7.8 4.6L5.6 6.1Z M4.0 9L7.8 12.4L11.6 9L10.0 9L7.8 10.5L5.6 9Z" fill="#12888b"/><path d="M5.6 6.1L7.8 4.6L10.0 6.1Z M5.6 9L7.8 10.5L10.0 9Z" fill="#12888b" opacity=".72"/><rect x="3.5999999999999996" y="7" width="8.4" height="1.05" fill="#12888b"/></svg>
<span class="t" style="top:708px;left:461.5px;color:#1a1a1a;letter-spacing:0.257px;">2: Vertreter 2</span>
<span class="t" style="top:727px;left:265.5px;color:#1a1a1a;letter-spacing:-0.335px;">Provisionssatz</span>
<svg class="i" style="left:390.2px;top:724.5px" width="12" height="15" viewBox="0 0 12 15"><path d="M.5 .5H8.3L11.3 3.5V13.8H.5Z" fill="url(#gdoc)" stroke="#6bb3b8" stroke-width=".9"/><path d="M1.2 14.3H11.8V4.2" fill="none" stroke="#5a9ea5" stroke-width=".9"/><path d="M8.3 .5V3.5H11.3Z" fill="#35b7c1" stroke="#6bb3b8" stroke-width=".5"/><path d="M2.5 8.1L4.8 10.8L9.4 5.5" fill="none" stroke="#cf0d12" stroke-width="1.45"/></svg>
<div class="f" style="left:407px;top:724px;width:407px;height:14px;background:#fff;"></div>
<div style="left:801px;top:725px;width:1px;height:14px;background:#9aa0a4;"></div>
<div style="left:802px;top:725px;width:13px;height:14px;background:#e5ecf0;"></div>
<svg class="i" style="left:801px;top:724px" width="15" height="16" viewBox="0 0 15 16"><path d="M4.0 6.1L7.8 2.7L11.6 6.1L10.0 6.1L7.8 4.6L5.6 6.1Z M4.0 9L7.8 12.4L11.6 9L10.0 9L7.8 10.5L5.6 9Z" fill="#12888b"/><path d="M5.6 6.1L7.8 4.6L10.0 6.1Z M5.6 9L7.8 10.5L10.0 9Z" fill="#12888b" opacity=".72"/><rect x="3.5999999999999996" y="7" width="8.4" height="1.05" fill="#12888b"/></svg>
<span class="t" style="top:764px;left:265.5px;color:#1a1a1a;letter-spacing:-0.131px;">Projekt</span>
<svg class="i" style="left:390.2px;top:762.5px" width="12" height="15" viewBox="0 0 12 15"><path d="M.5 .5H8.3L11.3 3.5V13.8H.5Z" fill="url(#gdoc)" stroke="#6bb3b8" stroke-width=".9"/><path d="M1.2 14.3H11.8V4.2" fill="none" stroke="#5a9ea5" stroke-width=".9"/><path d="M8.3 .5V3.5H11.3Z" fill="#35b7c1" stroke="#6bb3b8" stroke-width=".5"/><path d="M2.5 8.1L4.8 10.8L9.4 5.5" fill="none" stroke="#cf0d12" stroke-width="1.45"/></svg>
<div class="f" style="left:407px;top:762px;width:407px;height:14px;background:#fff;"></div>
<div style="left:801px;top:763px;width:1px;height:14px;background:#9aa0a4;"></div>
<div style="left:802px;top:763px;width:13px;height:14px;background:#e5ecf0;"></div>
<svg class="i" style="left:801px;top:762px" width="15" height="16" viewBox="0 0 15 16"><path d="M4.0 6.1L7.8 2.7L11.6 6.1L10.0 6.1L7.8 4.6L5.6 6.1Z M4.0 9L7.8 12.4L11.6 9L10.0 9L7.8 10.5L5.6 9Z" fill="#12888b"/><path d="M5.6 6.1L7.8 4.6L10.0 6.1Z M5.6 9L7.8 10.5L10.0 9Z" fill="#12888b" opacity=".72"/><rect x="3.5999999999999996" y="7" width="8.4" height="1.05" fill="#12888b"/></svg>
<div class="g" style="left:255px;top:800px;width:568px;height:64px;border:1px solid #8790a1;box-shadow:inset 1px 1px 0 #f6f9fa, 1px 1px 0 #f6f9fa;"></div>
<div style="left:258px;top:798px;width:92.2px;height:5px;background:#e5ecf0;"></div>
<span class="t" style="top:793px;left:260px;color:#3a9da6;letter-spacing:-0.247px;">Teilzahlungsvorgang</span>
<span class="t" style="top:820px;left:265.5px;color:#9b9fa4;text-shadow:1px 1px 0 #fff;letter-spacing:-0.459px;">Vorgangsnummer</span>
<div class="f fd" style="left:407px;top:819px;width:407px;height:14px;background:#e5ecf0;"><div style="left:0;top:0;width:46px;height:14px;background:#fff"></div></div>
<div style="left:801px;top:820px;width:1px;height:14px;background:#9aa0a4;"></div>
<div style="left:802px;top:820px;width:13px;height:14px;background:#e5ecf0;"></div>
<svg class="i" style="left:801px;top:819px" width="15" height="16" viewBox="0 0 15 16"><path d="M4.0 6.1L7.8 2.7L11.6 6.1L10.0 6.1L7.8 4.6L5.6 6.1Z M4.0 9L7.8 12.4L11.6 9L10.0 9L7.8 10.5L5.6 9Z" fill="#a6d3d4"/><path d="M5.6 6.1L7.8 4.6L10.0 6.1Z M5.6 9L7.8 10.5L10.0 9Z" fill="#a6d3d4" opacity=".72"/><rect x="3.5999999999999996" y="7" width="8.4" height="1.05" fill="#a6d3d4"/></svg>
<span class="t" style="top:839px;left:265.5px;color:#9b9fa4;text-shadow:1px 1px 0 #fff;letter-spacing:-0.218px;">Teilzahlungsart</span>
<div class="f" style="left:407px;top:838px;width:25px;height:14px;background:#fff;"></div>
<div style="left:418px;top:839px;width:1px;height:14px;background:#b3babf;"></div>
<div style="left:419px;top:839px;width:14px;height:14px;background:#e5ecf0;"></div>
<svg class="i" style="left:422px;top:843px" width="8" height="5" viewBox="0 0 8 5"><path d="M.3 .6H7.7L4 4.4Z" fill="#8fc3c4"/></svg>
<span class="t" style="top:840px;left:409.6px;color:#1a1a1a;letter-spacing:-0.597px;">K</span>
</div>
</body></html>
